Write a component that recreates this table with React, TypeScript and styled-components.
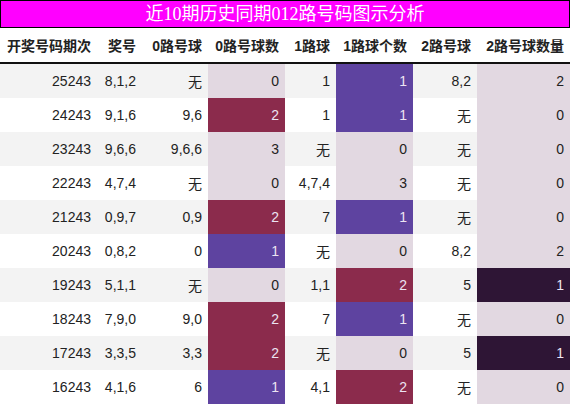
import styled, { createGlobalStyle } from 'styled-components'

const GlobalStyle = createGlobalStyle`
  body {
    margin: 0;
    background: #ffffff;
    font-family: "Liberation Sans", "Noto Sans CJK SC", sans-serif;
  }
`

type Tone = 'light' | 'purple' | 'maroon' | 'dark'

interface RowData {
  issue: string
  nums: string
  r0: string
  c0: number
  r1: string
  c1: number
  r2: string
  c2: number
}

const rows: RowData[] = [
  { issue: '25243', nums: '8,1,2', r0: '无', c0: 0, r1: '1', c1: 1, r2: '8,2', c2: 2 },
  { issue: '24243', nums: '9,1,6', r0: '9,6', c0: 2, r1: '1', c1: 1, r2: '无', c2: 0 },
  { issue: '23243', nums: '9,6,6', r0: '9,6,6', c0: 3, r1: '无', c1: 0, r2: '无', c2: 0 },
  { issue: '22243', nums: '4,7,4', r0: '无', c0: 0, r1: '4,7,4', c1: 3, r2: '无', c2: 0 },
  { issue: '21243', nums: '0,9,7', r0: '0,9', c0: 2, r1: '7', c1: 1, r2: '无', c2: 0 },
  { issue: '20243', nums: '0,8,2', r0: '0', c0: 1, r1: '无', c1: 0, r2: '8,2', c2: 2 },
  { issue: '19243', nums: '5,1,1', r0: '无', c0: 0, r1: '1,1', c1: 2, r2: '5', c2: 1 },
  { issue: '18243', nums: '7,9,0', r0: '9,0', c0: 2, r1: '7', c1: 1, r2: '无', c2: 0 },
  { issue: '17243', nums: '3,3,5', r0: '3,3', c0: 2, r1: '无', c1: 0, r2: '5', c2: 1 },
  { issue: '16243', nums: '4,1,6', r0: '6', c0: 1, r1: '4,1', c1: 2, r2: '无', c2: 0 },
]

const headers = ['开奖号码期次', '奖号', '0路号球', '0路号球数', '1路球', '1路球个数', '2路号球', '2路号球数量']
const widths = [97, 45, 66, 77, 51, 77, 64, 93]

// 0路 / 1路 列: 1 紫, 2 酒红, 其余浅色
const countTone = (n: number): Tone => (n === 1 ? 'purple' : n === 2 ? 'maroon' : 'light')
// 2路 列: 1 深色, 其余浅色
const lastTone = (n: number): Tone => (n === 1 ? 'dark' : 'light')

const toneBg: Record<Tone, string> = {
  light: '#e2d8e1',
  purple: '#5e43a0',
  maroon: '#8b2b4c',
  dark: '#2e1535',
}

const App = () => {
  return (
    <>
      <GlobalStyle />
      <Wrapper>
        <TitleBar>近10期历史同期012路号码图示分析</TitleBar>
        <Table>
          <colgroup>
            {widths.map((w, i) => (
              <col key={i} style={{ width: w }} />
            ))}
          </colgroup>
          <thead>
            <tr>
              {headers.map((h) => (
                <HeadCell key={h}>{h}</HeadCell>
              ))}
            </tr>
          </thead>
          <tbody>
            {rows.map((r, i) => (
              <BodyRow key={r.issue} striped={i % 2 === 0}>
                <Cell>{r.issue}</Cell>
                <Cell>{r.nums}</Cell>
                <Cell>{r.r0}</Cell>
                <Cell tone={countTone(r.c0)}>{r.c0}</Cell>
                <Cell>{r.r1}</Cell>
                <Cell tone={countTone(r.c1)}>{r.c1}</Cell>
                <Cell>{r.r2}</Cell>
                <Cell tone={lastTone(r.c2)}>{r.c2}</Cell>
              </BodyRow>
            ))}
          </tbody>
        </Table>
      </Wrapper>
    </>
  )
}

const Wrapper = styled.div`
  width: 570px;
  display: flex;
  flex-direction: column;
`

const TitleBar = styled.div`
  height: 26px;
  border: 1px solid #000;
  background: #ff00ff;
  color: #ffffff;
  font-family: "Liberation Serif", "Noto Sans CJK SC", serif;
  font-size: 18px;
  line-height: 26px;
  text-align: center;
`

const Table = styled.table`
  width: 570px;
  table-layout: fixed;
  border-collapse: collapse;
  font-size: 14px;
  color: #222;
`

const HeadCell = styled.th`
  height: 34px;
  padding: 0 6px 0 0;
  text-align: right;
  font-weight: bold;
  color: #222;
  white-space: nowrap;
  border-bottom: 2px solid #111;
`

const BodyRow = styled.tr<{ striped: boolean }>`
  background: ${({ striped }) => (striped ? '#f3f3f3' : '#ffffff')};
`

const Cell = styled.td<{ tone?: Tone }>`
  height: 34px;
  padding: 0 6px 0 0;
  text-align: right;
  white-space: nowrap;
  background: ${({ tone }) => (tone ? toneBg[tone] : 'transparent')};
  color: ${({ tone }) => (tone && tone !== 'light' ? '#ece4f2' : '#222')};
`

export default App
